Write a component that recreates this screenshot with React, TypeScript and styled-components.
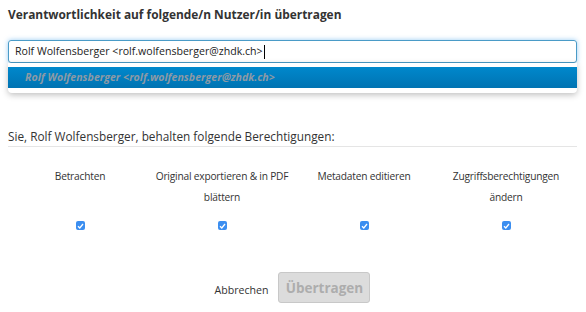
import React from 'react'
import styled, { createGlobalStyle } from 'styled-components'

const GlobalStyle = createGlobalStyle`
  body {
    margin: 0;
    background: #fff;
    font-family: 'Open Sans', 'Liberation Sans', sans-serif;
    color: #333;
  }
`

const Page = styled.div`
  padding: 5px 9px 0 8px;
`

const Title = styled.h3`
  margin: 0;
  font-size: 11.9px;
  font-weight: 700;
  line-height: 18px;
  color: #333;
`

const Field = styled.div`
  margin-top: 17px;
`

const Input = styled.div`
  height: 21px;
  border: 1px solid #4a9bc7;
  border-radius: 3px;
  box-shadow: 0 0 5px rgba(82, 168, 236, 0.6);
  padding: 0 6px;
  font-size: 10.6px;
  line-height: 21px;
  color: #222;
  display: flex;
  align-items: center;
`

const Caret = styled.span`
  display: inline-block;
  width: 1px;
  height: 14px;
  background: #000;
  margin-left: 1px;
`

const Dropdown = styled.div`
  background: #fff;
  border-radius: 0 0 4px 4px;
  box-shadow: 0 2px 6px rgba(0, 0, 0, 0.25);
  padding: 4px 0 5px;
`

const Option = styled.div`
  height: 21px;
  background: linear-gradient(#0088cc, #0073b2);
  padding-left: 17px;
  font-size: 10.6px;
  font-style: italic;
  font-weight: 700;
  line-height: 21px;
  color: #8c9aa6;
`

const Section = styled.div`
  margin-top: 34px;
  padding: 0 0 1px;
  font-size: 11.8px;
  line-height: 18px;
  border-bottom: 1px solid #e5e5e5;
`

const Grid = styled.div`
  display: grid;
  grid-template-columns: repeat(4, 1fr);
  margin-top: 19px;
  padding-left: 1px;
`

const Cell = styled.div`
  display: flex;
  flex-direction: column;
  align-items: center;
`

const Label = styled.div`
  font-size: 10.2px;
  letter-spacing: -0.2px;
  line-height: 21px;
  text-align: center;
  height: 42px;
  color: #333;
  padding: 0 4px;
`

const Check = styled.div`
  margin-top: 13px;
  width: 9px;
  height: 9px;
  border-radius: 2px;
  background: #3b8ef0;
  display: flex;
  align-items: center;
  justify-content: center;
`

const Actions = styled.div`
  display: flex;
  justify-content: center;
  align-items: center;
  gap: 10px;
  margin-top: 42px;
`

const Cancel = styled.span`
  font-size: 10.6px;
  color: #333;
  padding-top: 4px;
`

const Submit = styled.button`
  width: 92px;
  height: 31px;
  border: 1px solid #c8c8c8;
  border-radius: 3px;
  background: #dcdcdc;
  color: #adadad;
  font-family: 'Open Sans', 'Liberation Sans', sans-serif;
  font-size: 13.5px;
  font-weight: 700;
  padding: 0;
`

const permissions = [
  'Betrachten',
  'Original exportieren & in PDF blättern',
  'Metadaten editieren',
  'Zugriffsberechtigungen ändern',
]

const CheckMark = () => (
  <svg width="7" height="6" viewBox="0 0 7 6">
    <path d="M1 3.2 L2.8 5 L6 1" stroke="#fff" strokeWidth="1.3" fill="none" />
  </svg>
)

export default function App() {
  return (
    <>
      <GlobalStyle />
      <Page>
        <Title>Verantwortlichkeit auf folgende/n Nutzer/in übertragen</Title>
        <Field>
          <Input>
            Rolf Wolfensberger &lt;rolf.wolfensberger@zhdk.ch&gt;
            <Caret />
          </Input>
          <Dropdown>
            <Option>Rolf Wolfensberger &lt;rolf.wolfensberger@zhdk.ch&gt;</Option>
          </Dropdown>
        </Field>
        <Section>Sie, Rolf Wolfensberger, behalten folgende Berechtigungen:</Section>
        <Grid>
          {permissions.map((p) => (
            <Cell key={p}>
              <Label>{p}</Label>
              <Check>
                <CheckMark />
              </Check>
            </Cell>
          ))}
        </Grid>
        <Actions>
          <Cancel>Abbrechen</Cancel>
          <Submit>Übertragen</Submit>
        </Actions>
      </Page>
    </>
  )
}
